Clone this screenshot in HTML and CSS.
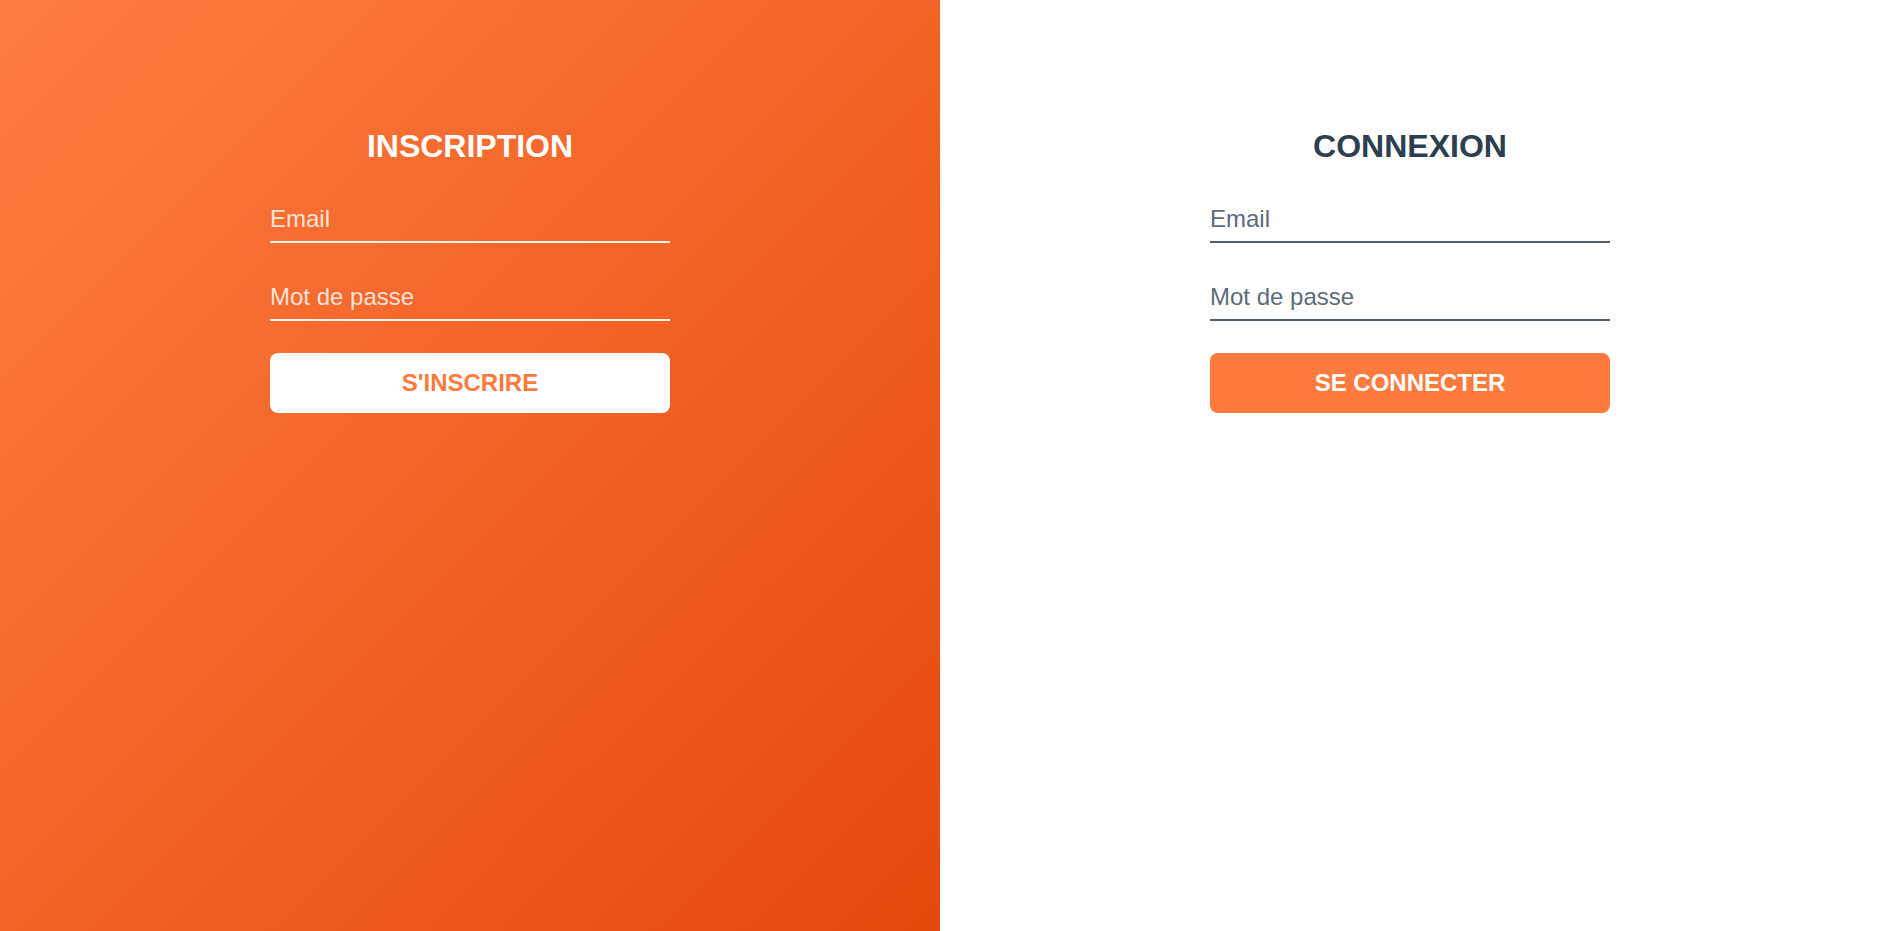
FILE: index.html
```html
<!DOCTYPE html>
<html lang="fr">
<head>
<meta charset="utf-8">
<title>Inscription / Connexion</title>
<link rel="stylesheet" href="styles.css">
</head>
<body>
<main class="page">
  <section class="panel panel-signup">
    <form class="form">
      <h2 class="title">INSCRIPTION</h2>
      <input class="field" type="email" placeholder="Email">
      <input class="field" type="password" placeholder="Mot de passe">
      <button class="btn" type="button">S'INSCRIRE</button>
    </form>
  </section>
  <section class="panel panel-login">
    <form class="form">
      <h2 class="title">CONNEXION</h2>
      <input class="field" type="email" placeholder="Email">
      <input class="field" type="password" placeholder="Mot de passe">
      <button class="btn" type="button">SE CONNECTER</button>
    </form>
  </section>
</main>
</body>
</html>
```
FILE: styles.css
```css
* { box-sizing: border-box; }
html, body { margin: 0; padding: 0; height: 100%; }
body { font-family: "Liberation Sans", Arial, sans-serif; }

.page {
  display: grid;
  grid-template-columns: 1fr 1fr;
  height: 100vh;
}

.panel {
  display: flex;
  justify-content: center;
  padding-top: 128px;
}

.panel-signup {
  background: linear-gradient(135deg, #ff7c40 0%, #e54a0c 100%);
}
.panel-login { background: #ffffff; }

.form {
  width: 400px;
  display: flex;
  flex-direction: column;
  gap: 32px;
}

.title {
  margin: 0;
  font-size: 32px;
  line-height: 37px;
  font-weight: 700;
  text-align: center;
}

.field {
  font-family: inherit;
  font-size: 24px;
  height: 46px;
  padding: 8px 0;
  border: 0;
  border-bottom: 2px solid;
  background: transparent;
  outline: none;
  border-radius: 0;
}

.btn {
  font-family: inherit;
  font-size: 24px;
  font-weight: 700;
  height: 60px;
  border: 0;
  border-radius: 8px;
  cursor: pointer;
}

.panel-signup .title { color: #ffffff; }
.panel-signup .field { color: #ffffff; border-bottom-color: #fff3ec; }
.panel-signup .field::placeholder { color: rgba(255, 255, 255, 0.82); }
.panel-signup .btn { background: #ffffff; color: #ff7a3d; }

.panel-login .title { color: #2c3e50; }
.panel-login .field { color: #2c3e50; border-bottom-color: #4f5e6d; }
.panel-login .field::placeholder { color: #5d6b7a; }
.panel-login .btn { background: #ff7a3d; color: #ffffff; }
```
